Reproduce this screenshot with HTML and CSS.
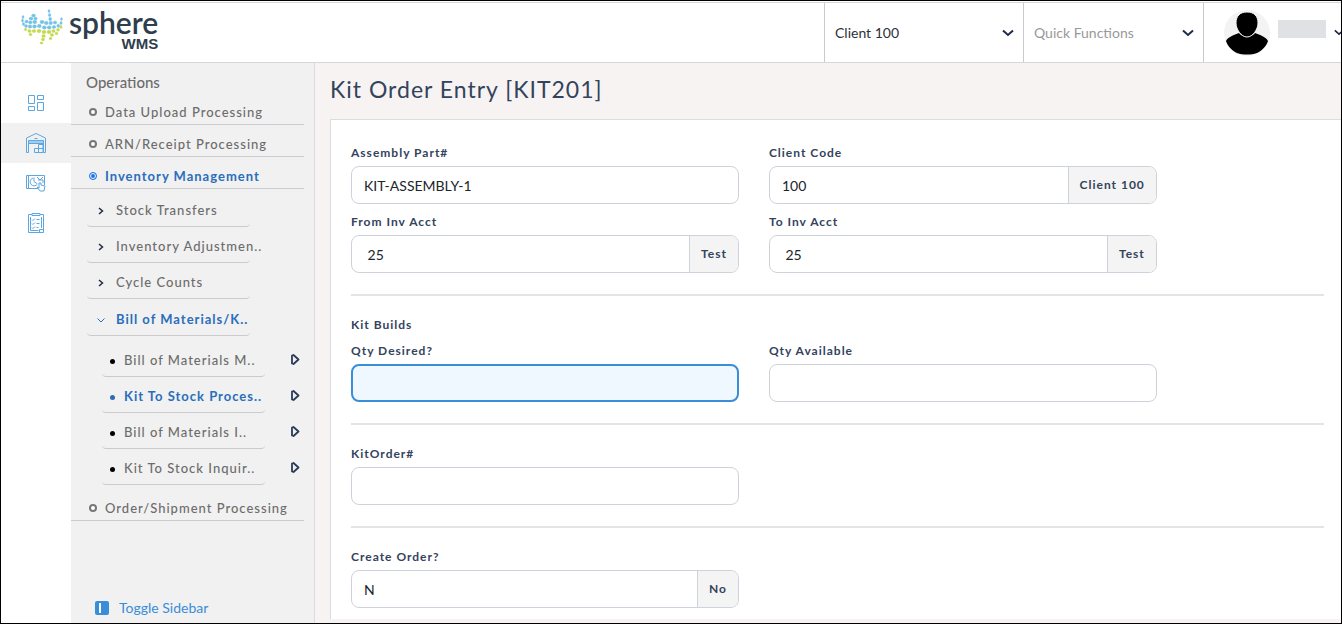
FILE: index.html
```html
<!DOCTYPE html>
<html lang="en">
<head>
<meta charset="utf-8">
<title>Kit Order Entry</title>
<link rel="stylesheet" href="styles.css">
</head>
<body>
<header class="topbar">
  <a class="logo" href="#" aria-label="Sphere WMS">
    <svg class="logo-mark" viewBox="0 0 42 36" width="42" height="36" aria-hidden="true">
      <g fill="#74c3e6" stroke="#74c3e6" stroke-width=".4">
        <ellipse cx="28" cy="2" rx="1" ry="1.6"/><ellipse cx="28.6" cy="6" rx="1.3" ry="1.6"/><ellipse cx="29.2" cy="10" rx="1.5" ry="1.7"/>
        <ellipse cx="12.5" cy="6.5" rx="1.9" ry="1.5"/><ellipse cx="10" cy="9.5" rx="1.9" ry="1.5"/><ellipse cx="14.5" cy="9.500" rx="1.7" ry="1.5"/>
        <ellipse cx="2" cy="8" rx="1" ry="1.5"/><ellipse cx="1.5" cy="11.5" rx="1" ry="1.5"/><ellipse cx="2.5" cy="15" rx="1.2" ry="1.6"/>
        <ellipse cx="5.500" cy="12.500" rx="1.6" ry="1.5"/><ellipse cx="9.300" cy="13.300" rx="1.8" ry="1.6"/><ellipse cx="13.8" cy="13" rx="2" ry="1.7"/>
        <ellipse cx="21" cy="13" rx="2" ry="1.7"/><ellipse cx="25.3" cy="14" rx="1.9" ry="1.7"/><ellipse cx="29.7" cy="14" rx="1.8" ry="1.7"/><ellipse cx="34" cy="13.5" rx="1.7" ry="1.6"/>
        <ellipse cx="40.5" cy="10" rx=".9" ry="1.5"/><ellipse cx="40" cy="14" rx="1.2" ry="1.5"/><ellipse cx="37.3" cy="16.8" rx="1.5" ry="1.6"/>
        <ellipse cx="5" cy="17" rx="1.5" ry="1.5"/><ellipse cx="9" cy="17.5" rx="1.8" ry="1.7"/><ellipse cx="13.5" cy="17.5" rx="2" ry="1.7"/><ellipse cx="18.3" cy="17" rx="2" ry="1.7"/><ellipse cx="23.3" cy="18.5" rx="2" ry="1.7"/><ellipse cx="28.2" cy="18.5" rx="2" ry="1.7"/><ellipse cx="33" cy="18" rx="1.8" ry="1.6"/>
      </g>
      <g fill="#c5d94a" stroke="#c5d94a" stroke-width=".4">
        <ellipse cx="4.5" cy="20.5" rx="1.2" ry="1.3"/><ellipse cx="8.5" cy="22" rx="1.7" ry="1.5"/><ellipse cx="13" cy="22" rx="1.9" ry="1.6"/><ellipse cx="18" cy="22" rx="2" ry="1.7"/><ellipse cx="23" cy="23" rx="2" ry="1.7"/><ellipse cx="28" cy="23" rx="2" ry="1.7"/><ellipse cx="32.5" cy="22" rx="1.7" ry="1.5"/><ellipse cx="37" cy="20.8" rx="1.5" ry="1.4"/><ellipse cx="40" cy="18" rx="1.1" ry="1.5"/>
        <ellipse cx="9.5" cy="25.5" rx="1.5" ry="1.2"/><ellipse cx="22.5" cy="27" rx="1.8" ry="1.5"/><ellipse cx="31" cy="26" rx="1.6" ry="1.4"/><ellipse cx="35.5" cy="24.5" rx="1.4" ry="1.3"/>
        <ellipse cx="22" cy="30.5" rx="1.6" ry="1.4"/><ellipse cx="29.5" cy="29.5" rx="1.4" ry="1.3"/><ellipse cx="20.5" cy="34" rx="1.6" ry="1.1"/>
      </g>
    </svg>
    <span class="logo-words"><span class="logo-name">sphere</span><span class="logo-sub">WMS</span></span>
  </a>
  <div class="picker picker-client">
    <select class="picker-select" aria-label="Client"><option>Client 100</option></select>
    <svg class="chevron" viewBox="0 0 12 8" width="12" height="8" aria-hidden="true"><path d="M1 1.500l5 4.500 5-4.500"/></svg>
  </div>
  <div class="picker picker-quick">
    <select class="picker-select muted" aria-label="Quick Functions"><option>Quick Functions</option></select>
    <svg class="chevron" viewBox="0 0 12 8" width="12" height="8" aria-hidden="true"><path d="M1 1.500l5 4.500 5-4.500"/></svg>
  </div>
  <button class="profile" type="button" aria-label="Account">
    <svg class="avatar" viewBox="0 0 46 46" width="46" height="46" aria-hidden="true">
      <circle cx="23" cy="23" r="23" fill="#f3f3f3"/>
      <path d="M2 31c2-4 8-6 13-8 4 5 12 5 16 0 5 2 11 4 13 8-2 6-7 10-11 12-6 2-14 2-20 0C9 41 4 37 2 31z"/>
      <path d="M23 2c7 0 11 4 11 11 0 6-5 14-11 14s-11-8-11-14C12 6 16 2 23 2z" stroke="#f3f3f3" stroke-width="1"/>
    </svg>
    <span class="user-name"></span>
    <svg class="chevron-small" viewBox="0 0 12 8" width="10" height="7" aria-hidden="true"><path d="M1 1.500l5 4.500 5-4.500"/></svg>
  </button>
</header>

<div class="shell">
  <nav class="rail" aria-label="Modules">
    <a class="rail-item" href="#" aria-label="Dashboard">
      <svg viewBox="0 0 20 20" width="20" height="20"><path d="M2.500 2.500h6v8h-6zM2.500 13.500h6v4h-6zM11.500 2.500h6v4h-6zM11.500 9.500h6v8h-6z"/></svg>
    </a>
    <a class="rail-item active" href="#" aria-label="Warehouse">
      <svg viewBox="0 0 20 20" width="20" height="20"><path d="M.5 19.500V5L10 .5 19.500 5v14.500h-2V7.500h-15v12h-2M2.500 10.500h15M2.500 9h15M8.500 5.500h3M8.500 15.500h8.500v4H8.500zM12.500 11.500h4.500v4M12.500 11.500v8"/></svg>
    </a>
    <a class="rail-item" href="#" aria-label="Analysis">
      <svg viewBox="0 0 20 20" width="20" height="20"><path d="M12 15.500H.5v-13h18V12M2.500 2.500v13M7 5a4 4 0 1 0 4.500 6M8 4.500v4l3 2M11 4l3 3 3-3M12 7h5v3M13 10v5l-2-1 3 4h4l1-5-4-1v-2z"/></svg>
    </a>
    <a class="rail-item" href="#" aria-label="Checklist">
      <svg viewBox="0 0 20 20" width="20" height="20"><path d="M6 1.500H2.500v18h15v-18H14M6 .5h8v2H6zM4.500 4v13.500h8M15.500 4v11M13.500 19.500v-3h4M6 6.500l1 1 2-2M6 10.500l1 1 2-2M6 14.500l1 1 2-2M10.500 6.500h3M10.500 10.500h3M10.500 14.500h2"/></svg>
    </a>
  </nav>

  <aside class="panel">
    <h2 class="panel-title">Operations</h2>
    <ul class="menu">
      <li><a class="menu-item" href="#"><span class="ring"></span>Data Upload Processing</a></li>
      <li><a class="menu-item" href="#"><span class="ring"></span>ARN/Receipt Processing</a></li>
      <li><a class="menu-item current" href="#"><span class="ring"></span>Inventory Management</a>
        <ul class="submenu">
          <li><a class="sub-item" href="#"><svg class="caret" viewBox="0 0 8 8" width="8" height="8"><path d="M2 1l3.500 3L2 7"/></svg>Stock Transfers</a></li>
          <li><a class="sub-item" href="#"><svg class="caret" viewBox="0 0 8 8" width="8" height="8"><path d="M2 1l3.500 3L2 7"/></svg>Inventory Adjustmen..</a></li>
          <li><a class="sub-item" href="#"><svg class="caret" viewBox="0 0 8 8" width="8" height="8"><path d="M2 1l3.500 3L2 7"/></svg>Cycle Counts</a></li>
          <li><a class="sub-item current" href="#"><svg class="caret open" viewBox="0 0 8 8" width="8" height="8"><path d="M.5 2.500L4 6l3.500-3.500"/></svg>Bill of Materials/K..</a>
            <ul class="leaves">
              <li class="leaf"><a class="leaf-item" href="#"><span class="dot"></span>Bill of Materials M..</a><button class="play" type="button" aria-label="Open"><svg viewBox="0 0 9 11" width="9" height="11"><path d="M1 1.500v8L2.500 10 7.500 5.500 2.500 1z"/></svg></button></li>
              <li class="leaf"><a class="leaf-item current" href="#"><span class="dot"></span>Kit To Stock Proces..</a><button class="play" type="button" aria-label="Open"><svg viewBox="0 0 9 11" width="9" height="11"><path d="M1 1.500v8L2.500 10 7.500 5.500 2.500 1z"/></svg></button></li>
              <li class="leaf"><a class="leaf-item" href="#"><span class="dot"></span>Bill of Materials I..</a><button class="play" type="button" aria-label="Open"><svg viewBox="0 0 9 11" width="9" height="11"><path d="M1 1.500v8L2.500 10 7.500 5.500 2.500 1z"/></svg></button></li>
              <li class="leaf"><a class="leaf-item" href="#"><span class="dot"></span>Kit To Stock Inquir..</a><button class="play" type="button" aria-label="Open"><svg viewBox="0 0 9 11" width="9" height="11"><path d="M1 1.500v8L2.500 10 7.500 5.500 2.500 1z"/></svg></button></li>
            </ul>
          </li>
        </ul>
      </li>
      <li><a class="menu-item" href="#"><span class="ring"></span>Order/Shipment Processing</a></li>
    </ul>
    <button class="toggle" type="button">
      <svg viewBox="0 0 14 14" width="14" height="14" aria-hidden="true"><rect width="14" height="14" rx="2" fill="#3a8dd8"/><rect x="4" y="2" width="2" height="10" fill="#fff"/></svg>
      Toggle Sidebar
    </button>
  </aside>

  <main class="main">
    <h1 class="title">Kit Order Entry [KIT201]</h1>
    <form class="card">
      <div class="fields">
        <div class="field">
          <label class="label" for="part">Assembly Part#</label>
          <div class="group"><input class="input" id="part" type="text" value="KIT-ASSEMBLY-1"></div>
        </div>
        <div class="field">
          <label class="label" for="client">Client Code</label>
          <div class="group"><input class="input" id="client" type="text" value="100"><span class="addon">Client 100</span></div>
        </div>
      </div>
      <div class="fields">
        <div class="field">
          <label class="label" for="from">From Inv Acct</label>
          <div class="group"><input class="input" id="from" type="text" value=" 25"><span class="addon">Test</span></div>
        </div>
        <div class="field">
          <label class="label" for="to">To Inv Acct</label>
          <div class="group"><input class="input" id="to" type="text" value=" 25"><span class="addon">Test</span></div>
        </div>
      </div>
      <hr class="rule">
      <h3 class="section-title">Kit Builds</h3>
      <div class="fields">
        <div class="field">
          <label class="label" for="desired">Qty Desired?</label>
          <div class="group active"><input class="input" id="desired" type="text"></div>
        </div>
        <div class="field">
          <label class="label" for="available">Qty Available</label>
          <div class="group"><input class="input" id="available" type="text"></div>
        </div>
      </div>
      <hr class="rule">
      <div class="fields">
        <div class="field">
          <label class="label" for="order">KitOrder#</label>
          <div class="group"><input class="input" id="order" type="text"></div>
        </div>
      </div>
      <hr class="rule">
      <div class="fields">
        <div class="field">
          <label class="label" for="create">Create Order?</label>
          <div class="group"><input class="input" id="create" type="text" value="N"><span class="addon">No</span></div>
        </div>
      </div>
    </form>
  </main>
</div>
</body>
</html>
```

FILE: styles.css
```css
*, *::before, *::after { box-sizing: border-box; }

body {
  margin: 0;
  min-height: 100vh;
  display: flex;
  flex-direction: column;
  border: 1px solid #000;
  background: #fff;
  color: #33435c;
  font-family: Lato, "Liberation Sans", sans-serif;
  font-size: 14px;
  line-height: 20px;
  overflow-x: hidden;
}

a { color: inherit; text-decoration: none; }
ul { list-style: none; margin: 0; padding: 0; }
button { border: 0; padding: 0; background: none; color: inherit; font: inherit; cursor: pointer; }
svg { flex: none; display: block; }

/* Top bar */
.topbar {
  display: flex;
  height: 61px;
  margin-top: 1px;
  border-top: 1px solid #d5d5dc;
  border-bottom: 1px solid #d5d7de;
}
.logo {
  display: flex;
  align-items: flex-start;
  gap: 6px;
  margin-right: auto;
  padding: 6px 0 0 20px;
}
.logo-words { display: flex; flex-direction: column; align-items: flex-end; color: #2f3e4c; }
.logo-name { font-size: 30px; line-height: 27px; font-weight: 600; }
.logo-sub { font: 700 15px/15px "Liberation Sans", sans-serif; }

.picker { display: grid; align-items: center; border-left: 1px solid #c9c9ce; }
.picker-client { width: 199px; }
.picker-quick { width: 180px; }
.picker-select, .picker .chevron { grid-area: 1 / 1; }
.picker-select {
  appearance: none;
  width: 100%;
  height: 100%;
  padding: 0 30px 0 10px;
  border: 0;
  background: #fff;
  color: #2e3138;
  font: inherit;
}
.picker-select.muted { color: #999; }
.chevron { justify-self: end; margin-right: 9px; pointer-events: none; }
.chevron path, .chevron-small path { fill: none; stroke: #1f2b49; stroke-width: 2; }

.profile {
  display: flex;
  align-items: center;
  gap: 8px;
  width: 138px;
  padding-left: 20px;
  border-left: 1px solid #c9c9ce;
  overflow: hidden;
}
.user-name { flex: none; width: 48px; height: 18px; margin-bottom: 8px; background: #dfe1e5; }

/* Shell */
.shell { display: flex; flex: 1; }

.rail { flex: none; width: 70px; padding-top: 20px; }
.rail-item { display: flex; align-items: center; justify-content: center; height: 40px; }
.rail-item.active { background: #f1f1f1; }
.rail-item path { fill: none; stroke: #5ca6e2; stroke-width: 1; }

.panel {
  flex: none;
  display: flex;
  flex-direction: column;
  width: 244px;
  padding: 9px 10px 5px 0;
  border-right: 1px solid #dcdcdf;
  background: #f1f1f1;
  color: #6c6c6c;
}
.panel-title { margin: 0 0 1px; padding-left: 15px; font-size: 15px; line-height: 20px; font-weight: 500; }

.menu { font-size: 13px; font-weight: 500; letter-spacing: 1px; }
.current { color: #2a6ebb; font-weight: 700; }
.menu-item {
  display: flex;
  align-items: center;
  gap: 8px;
  padding: 9px 0 2px 18px;
  border-bottom: 1px solid #cbcbcd;
  white-space: nowrap;
}
.ring { flex: none; width: 8px; height: 8px; border: 2px solid #777; border-radius: 50%; background: #fff; }
.current .ring { border: 1px solid #2a7de1; background: #1a75f0; box-shadow: inset 0 0 0 1px #fff; }

.submenu { padding: 2px 0 4px 16px; }
.sub-item {
  display: flex;
  align-items: center;
  gap: 11px;
  width: 163px;
  padding: 9px 0 6px 10px;
  border-bottom: 1px solid #cbcbcd;
  border-radius: 4px;
  white-space: nowrap;
}
.sub-item.current { padding-top: 10px; }
.caret { margin-top: 2px; }
.caret path { fill: none; stroke: #1f2b49; stroke-width: 1.5; }
.caret.open path { stroke: #2a6ebb; stroke-width: 1; }

.leaves { padding: 5px 0 0 15px; }
.leaf { display: flex; align-items: center; justify-content: space-between; padding-right: 4px; }
.leaf-item {
  display: flex;
  align-items: center;
  gap: 9px;
  width: 163px;
  padding: 9px 0 6px 8px;
  border-bottom: 1px solid #cbcbcd;
  border-radius: 4px;
  white-space: nowrap;
}
.dot { flex: none; width: 5px; height: 5px; margin-top: 2px; border-radius: 50%; background: #000; }
.current .dot { background: #2a6ebb; }
.play path { fill: none; stroke: #2a3b58; stroke-width: 1.8; stroke-linejoin: round; }

.toggle {
  display: flex;
  align-items: center;
  gap: 10px;
  margin: auto 0 0 24px;
  color: #3a8dd8;
}

/* Form */
.main { flex: 1; min-width: 0; padding: 10px 0 4px 15px; background: #f7f3f3; }
.title { margin: 0 0 14px; font-size: 23px; line-height: 32px; font-weight: 400; letter-spacing: 1px; }
.card {
  padding: 23px 17px 11px 20px;
  border: 1px solid #dcdcdf;
  border-width: 1px 0 0 1px;
  background: #fff;
}
.fields { display: grid; grid-template-columns: repeat(12, minmax(0, 1fr)); column-gap: 30px; }
.fields + .fields { margin-top: 8px; }
.field { grid-column: span 5; }
.label, .section-title {
  display: block;
  font-size: 12px;
  line-height: 20px;
  font-weight: 700;
  letter-spacing: 1px;
}
.label { margin-bottom: 3px; }
.section-title { margin: 0 0 6px; }
.rule { height: 2px; margin: 21px 0 19px; border: 0; background: #e4e4e4; }

.group {
  display: flex;
  height: 38px;
  border: 1px solid #ced2da;
  border-radius: 8px;
  background: #fff;
  overflow: hidden;
}
.group.active { border: 2px solid #3a8dd8; background: #eff7ff; }
.input {
  flex: 1;
  min-width: 0;
  padding: 2px 12px 0;
  border: 0;
  outline: 0;
  background: transparent;
  color: #212529;
  font: inherit;
}
.addon {
  display: flex;
  align-items: center;
  padding: 0 11px;
  border-left: 1px solid #ced2da;
  background: #f4f4f4;
  font-size: 12px;
  font-weight: 700;
  letter-spacing: 1px;
}
```
